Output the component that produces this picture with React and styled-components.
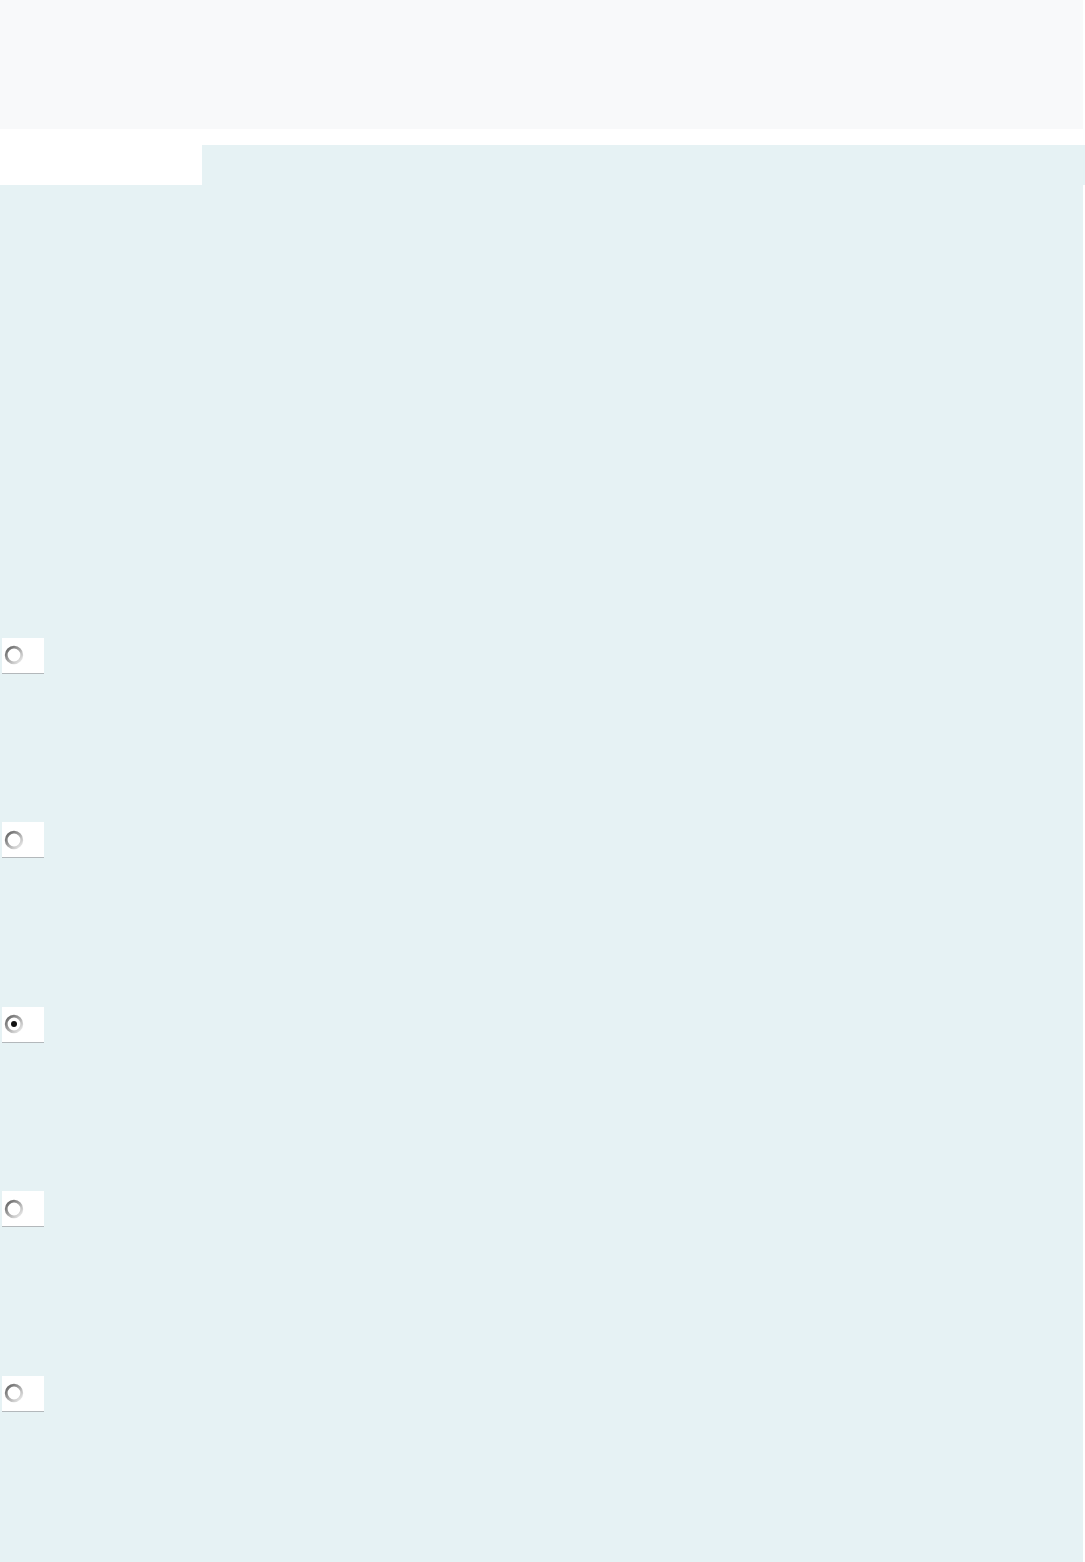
import styled, { createGlobalStyle } from 'styled-components';

const options = [
  { id: 'a', checked: false },
  { id: 'b', checked: false },
  { id: 'c', checked: true },
  { id: 'd', checked: false },
  { id: 'e', checked: false },
];

export default function App() {
  return (
    <>
      <GlobalStyle />
      <Page>
        <Header />
        <Toolbar>
          <Spacer />
          <TabStrip />
        </Toolbar>
        <Content>
          <OptionList>
            {options.map(item => (
              <OptionBox key={item.id}>
                <Radio checked={item.checked} />
              </OptionBox>
            ))}
          </OptionList>
        </Content>
      </Page>
    </>
  );
}

function Radio({ checked }) {
  return (
    <RadioIcon width="20" height="20" viewBox="0 0 20 20">
      <defs>
        <linearGradient id="ring" x1="0" y1="0" x2="1" y2="1">
          <stop offset="0" stopColor="#5f5f5f" />
          <stop offset="0.45" stopColor="#a0a0a0" />
          <stop offset="1" stopColor="#f2f2f2" />
        </linearGradient>
      </defs>
      <circle cx="10" cy="10" r="7.8" fill="#fff" stroke="url(#ring)" strokeWidth="2.8" />
      {checked && <circle cx="10" cy="10" r="3" fill="#111" />}
    </RadioIcon>
  );
}

const GlobalStyle = createGlobalStyle`
body {
  margin: 0;
  background: #fff;
  font-family: "Liberation Sans", Arial, sans-serif;
}
`;

const Page = styled.div`
width: 1085px;
min-height: 1562px;
display: flex;
flex-direction: column;
`;

const Header = styled.div`
width: 1083px;
height: 129px;
background: #f8f9fa;
`;

const Toolbar = styled.div`
display: flex;
margin-top: 16px;
height: 40px;
`;

const Spacer = styled.div`
width: 202px;
background: #fff;
`;

const TabStrip = styled.div`
flex: 1;
background: #e6f2f4;
`;

const Content = styled.div`
width: 1083px;
height: 1377px;
background: #e6f2f4;
padding-top: 452.7px;
box-sizing: border-box;
`;

const OptionList = styled.div`
display: flex;
flex-direction: column;
gap: 148.5px;
padding-left: 2px;
`;

const OptionBox = styled.div`
width: 42px;
height: 36px;
background: #fff;
border-bottom: 1px solid #b3b8bb;
display: flex;
align-items: center;
padding-left: 2px;
box-sizing: border-box;
`;

const RadioIcon = styled.svg`
display: block;
filter: blur(0.35px);
`;
